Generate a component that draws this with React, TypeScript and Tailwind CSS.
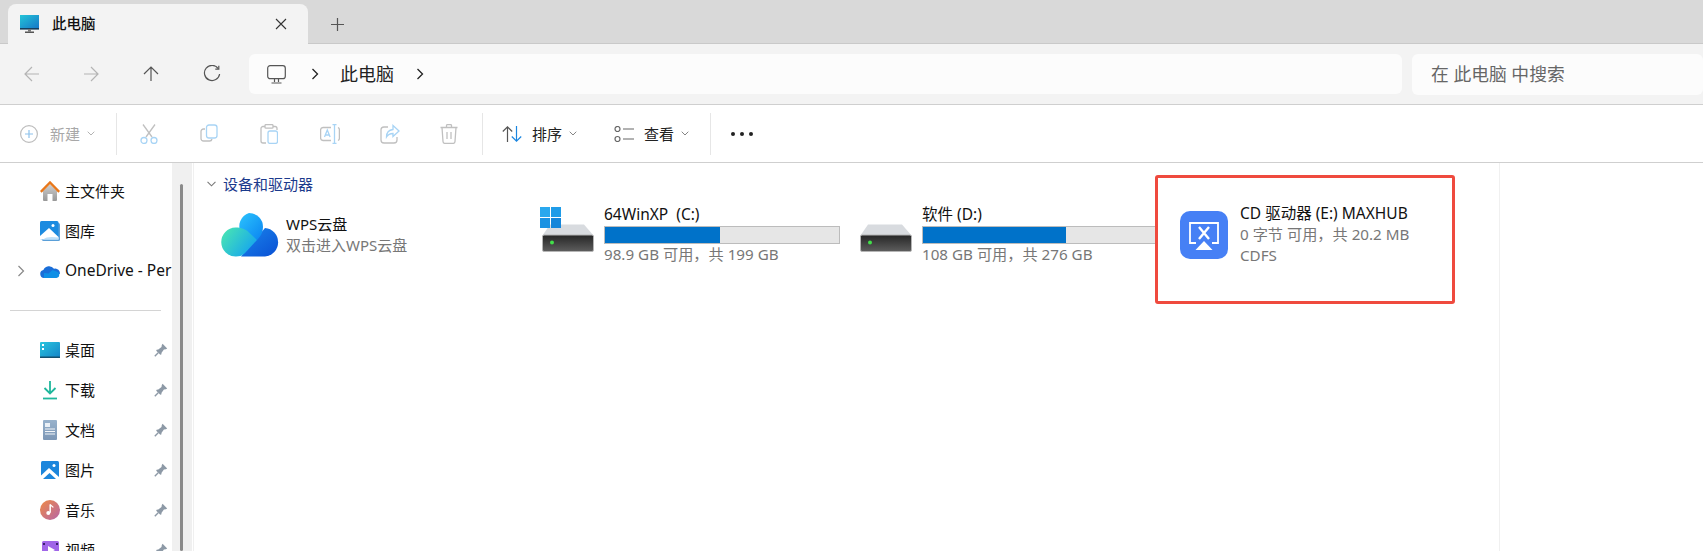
import React from "react";

const S = ({ w, h, vb, children, className = "" }: { w: number; h: number; vb?: string; children: React.ReactNode; className?: string }) => (
  <svg width={w} height={h} viewBox={vb ?? `0 0 ${w} ${h}`} fill="none" className={`shrink-0 ${className}`}>
    {children}
  </svg>
);

const Chev = ({ w = 8, h = 5, c = "#777" }: { w?: number; h?: number; c?: string }) => (
  <S w={w} h={h} vb="0 0 8 5"><path d="M.7.7 4 4l3.3-3.3" stroke={c} strokeWidth="0.9" /></S>
);
const ChevR = ({ c = "#222" }: { c?: string }) => (
  <S w={8} h={12}><path d="M1.5 1 6.5 6l-5 5" stroke={c} strokeWidth="1.3" /></S>
);

const Arrow = ({ dir, c }: { dir: "l" | "r" | "u"; c: string }) => (
  <S w={18} h={18}>
    {dir === "l" && <path d="M16 9H2M9 2 2 9l7 7" stroke={c} strokeWidth="1.2" />}
    {dir === "r" && <path d="M2 9h14M9 2l7 7-7 7" stroke={c} strokeWidth="1.2" />}
    {dir === "u" && <path d="M9 16V2M2 9l7-7 7 7" stroke={c} strokeWidth="1.2" />}
  </S>
);

const Pin = () => (
  <S w={14} h={14}>
    <path d="M8.6.8 13.2 5.4 11.9 6.2 9.9 6.5 7.6 9.7 7.3 11.4 6.3 11.8 2.2 7.7 2.6 6.7 4.3 6.4 7.5 4.1 7.8 2.1Z" fill="#8d99a6" />
    <path d="M4.2 9.8.8 13.2" stroke="#8d99a6" strokeWidth="1.4" />
  </S>
);

function NavRow({ icon, label, pin, chevron, wide }: { icon: React.ReactNode; label: string; pin?: boolean; chevron?: boolean; wide?: boolean }) {
  return (
    <div className="flex h-10 shrink-0 items-center">
      <div className="flex w-10 shrink-0 justify-center pl-[1px]">{chevron ? <S w={8} h={12}><path d="M1.5 1 6.5 6l-5 5" stroke="#888" strokeWidth="1.2" /></S> : null}</div>
      <div className="flex w-5 shrink-0 justify-center">{icon}</div>
      <span className={`ml-[5px] min-w-0 flex-1 overflow-hidden whitespace-nowrap text-[#111] ${wide ? "text-[15.5px]" : "text-[15px]"}`}>{label}</span>
      {pin ? <div className="mr-[4px] shrink-0"><Pin /></div> : null}
    </div>
  );
}

const Disk = () => (
  <S w={52} h={28}>
    <defs>
      <linearGradient id="dk" x1="0" y1="0" x2="0" y2="1">
        <stop offset="0" stopColor="#252525" />
        <stop offset="1" stopColor="#5e5e5e" />
      </linearGradient>
    </defs>
    <path d="M8 .5h34l9.500 11H.5Z" fill="#d8dbdf" />
    <rect x=".5" y="11" width="51" height="16.500" rx="1.500" fill="url(#dk)" stroke="#b5b5b5" />
    <circle cx="10" cy="18.500" r="2" fill="#42e04a" />
  </S>
);

const WinLogo = () => (
  <S w={21} h={21}>
    <rect x="0" y="0" width="10" height="10" fill="#2aa8ee" />
    <rect x="11" y="0" width="10" height="10" fill="#1f9ce8" />
    <rect x="0" y="11" width="10" height="10" fill="#1b92e2" />
    <rect x="11" y="11" width="10" height="10" fill="#1586da" />
  </S>
);

function DriveTile({ name, free, pct, windows }: { name: string; free: string; pct: number; windows?: boolean }) {
  return (
    <div className="flex w-[318px] shrink-0 items-start">
      <div className="relative mt-[2px] flex h-[45px] w-[64px] shrink-0 items-end pl-[2px]">
        {windows ? <div className="absolute left-0 top-0"><WinLogo /></div> : null}
        <Disk />
      </div>
      <div className="w-[236px]">
        <div className="flex h-[19px] items-center whitespace-pre text-[15.5px] text-[#111]">{name}</div>
        <div className="mt-[2px] h-[18px] border border-[#bcbcbc] bg-[#e6e6e6]">
          <div className="h-full bg-[#0072c9]" style={{ width: `${pct}%` }} />
        </div>
        <div className="flex h-[20px] items-center text-[15.2px] text-[#777]">{free}</div>
      </div>
    </div>
  );
}

export default function App() {
  return (
    <div className="flex h-[551px] w-[1703px] flex-col overflow-hidden bg-white font-['Noto_Sans','Noto_Sans_CJK_SC',sans-serif]">
      {/* Tab strip */}
      <div className="flex h-[44px] shrink-0 items-end border-b border-[#c9c9c9] bg-[#d9d9d9] pl-[8px]">
        <div className="-mb-px flex h-[40px] w-[300px] items-center rounded-t-lg bg-[#f3f3f3] pl-[12px] pr-[21px]">
          <S w={19} h={18}>
            <defs>
              <linearGradient id="mon" x1="0" y1="0" x2="1" y2="1">
                <stop offset="0" stopColor="#23c5d8" />
                <stop offset="1" stopColor="#1678c8" />
              </linearGradient>
            </defs>
            <rect x="0" y="0" width="19" height="13" fill="url(#mon)" />
            <rect x="0" y="13" width="19" height="1.6" fill="#163f5e" />
            <rect x="8" y="14" width="3" height="2.5" fill="#777" />
            <rect x="5" y="16.5" width="9" height="1.5" fill="#555" />
          </S>
          <span className="ml-[13px] flex-1 text-[14.5px] font-medium text-[#111]">此电脑</span>
          <S w={12} h={12}><path d="M1 1l10 10M11 1 1 11" stroke="#333" strokeWidth="1.1" /></S>
        </div>
        <div className="mb-[12px] ml-[23px]">
          <S w={13} h={13}><path d="M6.5 0v13M0 6.5h13" stroke="#555" strokeWidth="1.2" /></S>
        </div>
      </div>

      {/* Address row */}
      <div className="flex h-[61px] shrink-0 items-center border-b border-[#cfcfcf] bg-[#f3f3f3] pl-[23px]">
        <Arrow dir="l" c="#b4b4b4" />
        <div className="ml-[41px]"><Arrow dir="r" c="#b4b4b4" /></div>
        <div className="ml-[42px]"><Arrow dir="u" c="#555" /></div>
        <div className="ml-[43px]">
          <S w={18} h={18}>
            <path d="M15.3 3.6A7.6 7.6 0 1 0 16.6 9" stroke="#555" strokeWidth="1.2" />
            <path d="M15.8 .8v3.4h-3.5" stroke="#555" strokeWidth="1.2" />
          </S>
        </div>
        <div className="ml-[28px] flex h-[40px] w-[1153px] items-center rounded-md bg-[#fcfcfc] pl-[18px]">
          <S w={19} h={19}>
            <rect x=".7" y=".7" width="17.6" height="13" rx="2.5" stroke="#555" strokeWidth="1.2" />
            <path d="M7.5 14v3M11.5 14v3M4.5 18h10" stroke="#555" strokeWidth="1.2" />
          </S>
          <div className="ml-[25px]"><ChevR /></div>
          <span className="ml-[21px] text-[18px] text-[#222]">此电脑</span>
          <div className="ml-[22px]"><ChevR /></div>
        </div>
        <div className="ml-[10px] flex h-[41px] flex-1 items-center rounded-md bg-[#fcfcfc] pl-[19px] text-[17.8px] text-[#666]">
          在 此电脑 中搜索
        </div>
      </div>

      {/* Command bar */}
      <div className="flex h-[58px] shrink-0 items-center border-b border-[#cfcfcf] bg-white pl-[20px]">
        <S w={18} h={18}>
          <circle cx="9" cy="9" r="8.4" stroke="#bdbdbd" strokeWidth="1.2" />
          <path d="M9 5v8M5 9h8" stroke="#8ec2ec" strokeWidth="1.2" />
        </S>
        <span className="ml-[12px] pt-[2px] text-[15px] text-[#a8a8a8]">新建</span>
        <div className="ml-[7px]"><Chev c="#aaa" /></div>
        <div className="ml-[21px] h-[42px] w-px bg-[#e6e6e6]" />
        <div className="ml-[23px]">
          <S w={18} h={20}>
            <path d="M3 .5 12 13M15 .5 6 13" stroke="#c0c0c0" strokeWidth="1.3" />
            <circle cx="4" cy="16.500" r="3" stroke="#a8d4f5" strokeWidth="1.3" />
            <circle cx="14" cy="16.500" r="3" stroke="#a8d4f5" strokeWidth="1.3" />
          </S>
        </div>
        <div className="ml-[42px]">
          <S w={18} h={20}>
            <path d="M5 5H3.500A2.500 2.500 0 0 0 1 7.500v7A2.500 2.500 0 0 0 3.500 17h6A2.500 2.500 0 0 0 12 15" stroke="#c0c0c0" strokeWidth="1.3" />
            <rect x="6.500" y="1" width="10.500" height="13" rx="2.500" stroke="#a8d4f5" strokeWidth="1.3" />
          </S>
        </div>
        <div className="ml-[42px]">
          <S w={18} h={20}>
            <path d="M5 2.500H3A2 2 0 0 0 1 4.500V17a2 2 0 0 0 2 2h3M13 2.500h2a2 2 0 0 1 2 2V6" stroke="#c0c0c0" strokeWidth="1.3" />
            <rect x="5" y=".6" width="8" height="3.600" rx="1" stroke="#c0c0c0" strokeWidth="1.3" />
            <rect x="8" y="7" width="9.500" height="12.400" rx="2" stroke="#a8d4f5" strokeWidth="1.3" />
          </S>
        </div>
        <div className="ml-[42px]">
          <S w={20} h={20}>
            <path d="M11 3.500H3A2.500 2.500 0 0 0 .6 6v8a2.500 2.500 0 0 0 2.400 2.500h8M18 3.500a2.500 2.500 0 0 1 1.400 2.500v8a2.500 2.500 0 0 1-1.400 2.500" stroke="#c0c0c0" strokeWidth="1.3" />
            <path d="M4.500 13l2.800-7 2.800 7M5.500 11h4" stroke="#a8d4f5" strokeWidth="1.300" />
            <path d="M14.500 .6v18.800M12.500.6h4M12.500 19.400h4" stroke="#a8d4f5" strokeWidth="1.300" />
          </S>
        </div>
        <div className="ml-[40px]">
          <S w={20} h={20}>
            <path d="M8 3H4a3 3 0 0 0-3 3v10a3 3 0 0 0 3 3h10a3 3 0 0 0 3-3v-3" stroke="#c0c0c0" strokeWidth="1.3" />
            <path d="M13 1.500 19 7l-6 5.500V9.500c-3 0-5 1-6.500 3.500 0-4 2-7 6.500-7.500Z" stroke="#a8d4f5" strokeWidth="1.3" />
          </S>
        </div>
        <div className="ml-[40px]">
          <S w={18} h={20}>
            <path d="M.5 3.500h17M6.500 3.500V1.500A1 1 0 0 1 7.500.6h3a1 1 0 0 1 1 1v1.900M2 3.500l1 14a2 2 0 0 0 2 1.900h8a2 2 0 0 0 2-1.900l1-14M7 8v7M11 8v7" stroke="#c0c0c0" strokeWidth="1.3" />
          </S>
        </div>
        <div className="ml-[24px] h-[42px] w-px bg-[#e6e6e6]" />
        <div className="ml-[19px]">
          <S w={20} h={20}>
            <path d="M5.500 18V3M.8 7.500 5.500 2.800l4.700 4.700" stroke="#555" strokeWidth="1.2" />
            <path d="M14.500 2v15M9.800 12.500l4.700 4.700 4.700-4.700" stroke="#1b86e0" strokeWidth="1.2" />
          </S>
        </div>
        <span className="ml-[10px] pt-[2px] text-[15px] text-[#222]">排序</span>
        <div className="ml-[7px]"><Chev c="#777" /></div>
        <div className="ml-[37px]">
          <S w={20} h={16}>
            <circle cx="3.500" cy="3" r="2.500" stroke="#666" strokeWidth="1.2" />
            <circle cx="3.500" cy="13" r="2.500" stroke="#666" strokeWidth="1.2" />
            <path d="M9 3h11M9 13h11" stroke="#666" strokeWidth="1.2" />
          </S>
        </div>
        <span className="ml-[10px] pt-[2px] text-[15px] text-[#222]">查看</span>
        <div className="ml-[7px]"><Chev c="#777" /></div>
        <div className="ml-[21px] h-[42px] w-px bg-[#e6e6e6]" />
        <div className="ml-[20px] flex items-center gap-[5px]">
          <div className="h-[4px] w-[4px] rounded-full bg-[#222]" />
          <div className="h-[4px] w-[4px] rounded-full bg-[#222]" />
          <div className="h-[4px] w-[4px] rounded-full bg-[#222]" />
        </div>
      </div>

      {/* Body */}
      <div className="flex min-h-0 flex-1">
        <div className="flex w-[172px] shrink-0 flex-col overflow-hidden pt-[8px]">
          <NavRow label="主文件夹" icon={
            <S w={20} h={20}>
              <defs>
                <linearGradient id="hm" x1="0" y1="0" x2="0" y2="1"><stop offset="0" stopColor="#d0d0d0" /><stop offset="1" stopColor="#989898" /></linearGradient>
              </defs>
              <path d="M3 10v9a1 1 0 0 0 1 1h3.500v-7h5v7H16a1 1 0 0 0 1-1v-9L10 3Z" fill="url(#hm)" />
              <path d="M.8 10.800 10 1.500l9.200 9.300" stroke="#e8771a" strokeWidth="2.400" />
            </S>} />
          <NavRow label="图库" icon={
            <S w={20} h={20}>
              <rect x="2" y="2" width="18" height="18" rx="1.500" fill="#5a9fd8" />
              <rect x="0" y="0" width="18.500" height="18.500" rx="1.500" fill="#1c8be0" />
              <path d="M0 18.500V15L9 7l9.500 9v2.500Z" fill="#fff" />
              <path d="M3 18.500c3-3 9-3 15.500-2v2Z" fill="#bfe0f8" />
              <circle cx="13" cy="4.500" r="1.500" fill="#fff" />
            </S>} />
          <NavRow label="OneDrive - Per" chevron wide icon={
            <S w={20} h={13}>
              <path d="M4 13a4 4 0 0 1-.6-7.900A6 6 0 0 1 14 3.800a4.500 4.500 0 0 1 5.800 5.200Z" fill="#1a6ed8" />
              <path d="M4 13h12.500a3.300 3.300 0 0 0 0-6.500l-4-1.500-4 3.500L4 8Z" fill="#0f8fe6" />
            </S>} />
          <div className="ml-[10px] mb-[19px] mt-[19px] h-px w-[151px] shrink-0 bg-[#d4d4d4]" />
          <NavRow label="桌面" pin icon={
            <S w={20} h={16}>
              <defs>
                <linearGradient id="dsk" x1="0" y1="0" x2="1" y2="1"><stop offset="0" stopColor="#2ac6de" /><stop offset="1" stopColor="#1584c8" /></linearGradient>
              </defs>
              <rect width="20" height="15.500" rx="1" fill="url(#dsk)" />
              <rect y="14.500" width="20" height="1.500" fill="#15506f" />
              <rect x="2" y="2" width="2" height="2" fill="#fff" />
              <rect x="2" y="6" width="2" height="2" fill="#fff" />
            </S>} />
          <NavRow label="下载" pin icon={
            <S w={16} h={20}>
              <path d="M8 1v12M2.500 8 8 13.500 13.500 8" stroke="#1fb79c" strokeWidth="1.800" />
              <path d="M1 18.500h14" stroke="#1fb79c" strokeWidth="1.800" />
            </S>} />
          <NavRow label="文档" pin icon={
            <S w={14} h={20}>
              <defs>
                <linearGradient id="doc" x1="0" y1="0" x2="0" y2="1"><stop offset="0" stopColor="#98b2cc" /><stop offset="1" stopColor="#7c97b6" /></linearGradient>
              </defs>
              <rect width="14" height="20" rx="1" fill="url(#doc)" />
              <path d="M2 6h5M2 9h10M2 11.500h10M2 14h10" stroke="#fff" strokeWidth=".9" />
              <rect x="2" y="3" width="5" height="4" fill="#eaf0f6" />
            </S>} />
          <NavRow label="图片" pin icon={
            <S w={18} h={18}>
              <rect width="18" height="18" rx="1.500" fill="#1c86dc" />
              <path d="M0 18v-3.500L8 7l10 9v2Z" fill="#fff" />
              <path d="M2 18 8.500 12 15 18Z" fill="#1c86dc" />
              <circle cx="13" cy="4.500" r="1.500" fill="#fff" />
            </S>} />
          <NavRow label="音乐" pin icon={
            <S w={20} h={20}>
              <defs>
                <linearGradient id="mus" x1="0" y1="0" x2="1" y2="1"><stop offset="0" stopColor="#ef8a45" /><stop offset="1" stopColor="#b565a8" /></linearGradient>
              </defs>
              <circle cx="10" cy="10" r="10" fill="url(#mus)" />
              <path d="M10.200 4.500v8.200" stroke="#fff" strokeWidth="1.500" />
              <path d="M10.200 4.500c.5 1.500 2.500 1.500 3 3" stroke="#fff" strokeWidth="1.300" />
              <circle cx="8.300" cy="13" r="2" fill="#fff" />
            </S>} />
          <NavRow label="视频" pin icon={
            <S w={17} h={18}>
              <rect width="17" height="18" rx="1.500" fill="#a066e8" />
              <path d="M6 5l7 4-7 4Z" fill="#fff" />
              <rect x="1" y="2" width="2" height="2" fill="#3c2070" />
              <rect x="14" y="2" width="2" height="2" fill="#3c2070" />
            </S>} />
        </div>
        {/* Scrollbar */}
        <div className="w-[20px] shrink-0 bg-[#f0f0f0] pl-[8px] pt-[21px]">
          <div className="h-full w-[3px] rounded-full bg-[#8a8a8a]" />
        </div>
        <div className="ml-[1px] w-px shrink-0 bg-[#f0f0f0]" />

        {/* Main content */}
        <div className="relative flex min-w-0 flex-1 pl-[12px]">
          <div className="w-[1294px] shrink-0 overflow-hidden border-r border-[#f0f0f0] pt-[12px]">
            <div className="flex h-[18px] items-center">
              <Chev w={11} h={6} c="#777" />
              <span className="ml-[6px] text-[15px] text-[#1b3a8c]">设备和驱动器</span>
            </div>
            <div className="mt-[12px] flex pl-[15px]">
              <div className="flex w-[319px] shrink-0 items-start pt-[8px]">
                <S w={58} h={44}>
                  <defs>
                    <linearGradient id="w1" x1="0" y1="0" x2="1" y2="1"><stop offset="0" stopColor="#2cc4fc" /><stop offset="1" stopColor="#0a84f2" /></linearGradient>
                    <linearGradient id="w2" x1="0" y1="0" x2="1" y2="1"><stop offset="0" stopColor="#1a86ec" /><stop offset="1" stopColor="#0a50d4" /></linearGradient>
                    <linearGradient id="w3" x1="0" y1="0" x2="1" y2="0.6"><stop offset="0" stopColor="#4ceaae" /><stop offset="1" stopColor="#16a6ee" /></linearGradient>
                  </defs>
                  <path d="M20 43.500 44 15a14.300 14.300 0 0 1 0 28.500Z" fill="url(#w2)" />
                  <path d="M28 0a14 14 0 0 1 14 14c0 5-2 9-6 13L20 20a14 14 0 0 1 8-20Z" fill="url(#w1)" />
                  <path d="M14.500 14.500C20 14.500 25 16 28 19.500L36 27 24 40c-2.500 2.500-5 3.500-9 3.500a14.500 14.500 0 0 1-.5-29Z" fill="url(#w3)" />
                </S>
                <div className="ml-[7px] pt-[1px]">
                  <div className="text-[15px] leading-[21px] text-[#111]">WPS云盘</div>
                  <div className="text-[15px] leading-[21px] text-[#777]">双击进入WPS云盘</div>
                </div>
              </div>
              <DriveTile name="64WinXP  (C:)" free="98.9 GB 可用，共 199 GB" pct={49} windows />
              <DriveTile name="软件 (D:)" free="108 GB 可用，共 276 GB" pct={61} />
            </div>
          </div>

          {/* Red annotation over the fourth tile */}
          <div className="absolute left-[961px] top-[12px] flex h-[129px] w-[300px] items-start rounded-[3px] border-[3px] border-[#ef4a3e] bg-white pl-[22px] pt-[33px]">
            <div className="flex h-[48px] w-[48px] shrink-0 items-center justify-center rounded-[10px] bg-[#4680f5]">
              <S w={30} h={30}>
                <path d="M7 23H1V3h28v20h-6" stroke="#fff" strokeWidth="1.800" />
                <path d="M10 7l10 12M20 7 10 19" stroke="#fff" strokeWidth="2.400" />
                <path d="M15 21 23.500 30h-17Z" fill="#fff" />
              </S>
            </div>
            <div className="-mt-[8px] ml-[12px]">
              <div className="whitespace-nowrap text-[15.5px] leading-[21px] text-[#111]">CD 驱动器 (E:) MAXHUB</div>
              <div className="whitespace-nowrap text-[15.2px] leading-[21px] text-[#777]">0 字节 可用，共 20.2 MB</div>
              <div className="text-[15.2px] leading-[21px] text-[#777]">CDFS</div>
            </div>
          </div>
        </div>
      </div>
    </div>
  );
}
